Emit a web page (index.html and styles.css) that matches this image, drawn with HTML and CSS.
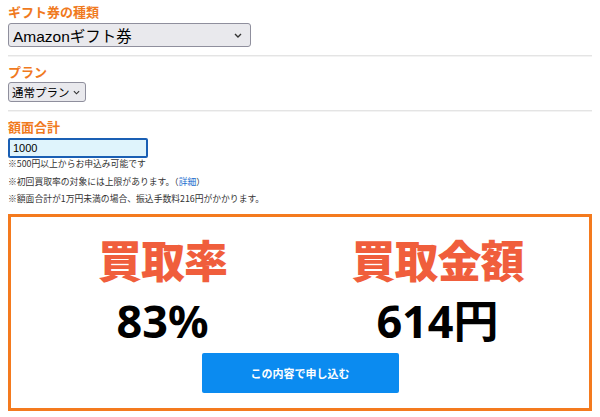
FILE: index.html
```html
<!DOCTYPE html>
<html lang="ja">
<head>
<meta charset="utf-8">
<link rel="stylesheet" href="styles.css">
</head>
<body>
<div class="page">
  <div class="field">
    <div class="label">ギフト券の種類</div>
    <div class="select select-wide"><span>Amazonギフト券</span><svg class="chev" viewBox="0 0 8 5" width="8" height="5"><path d="M1 1l3 3 3-3" fill="none" stroke="#333" stroke-width="1.4"/></svg></div>
  </div>
  <div class="sep"></div>
  <div class="field">
    <div class="label">プラン</div>
    <div class="select select-small"><span>通常プラン</span><svg class="chev" viewBox="0 0 8 5" width="7" height="5"><path d="M1 1l3 3 3-3" fill="none" stroke="#333" stroke-width="1.3"/></svg></div>
  </div>
  <div class="sep"></div>
  <div class="field">
    <div class="label">額面合計</div>
    <div class="input">1000</div>
    <div class="notes">
      <p class="note">※500円以上からお申込み可能です</p>
      <p class="note">※初回買取率の対象には上限があります。（<a class="link">詳細</a>）</p>
      <p class="note">※額面合計が1万円未満の場合、振込手数料216円がかかります。</p>
    </div>
  </div>
  <div class="result">
    <div class="cols">
      <div class="col">
        <div class="big-label">買取率</div>
        <div class="big-value">83%</div>
      </div>
      <div class="col">
        <div class="big-label">買取金額</div>
        <div class="big-value">614円</div>
      </div>
    </div>
    <div class="btn">この内容で申し込む</div>
  </div>
</div>
</body>
</html>
```
FILE: styles.css
```css
html, body {
  margin: 0;
  padding: 0;
  background: #fff;
}
body {
  font-family: "Noto Sans CJK JP", "Noto Sans", sans-serif;
  color: #222;
}
.page {
  width: 584px;
  padding: 2px 8px 0;
}
.label {
  color: #f07a1e;
  font-weight: bold;
  font-size: 13px;
  line-height: 20px;
}
.field {
  display: flex;
  flex-direction: column;
  align-items: flex-start;
}
.select {
  display: flex;
  align-items: center;
  justify-content: space-between;
  box-sizing: border-box;
  background: #e9e9ed;
  border: 1px solid #8f8f9d;
  border-radius: 3px;
  color: #000;
}
.select-wide {
  width: 243px;
  height: 24px;
  margin-top: 1px;
  padding: 0 8px 0 4px;
  font-family: "Liberation Sans", "Noto Sans CJK JP", sans-serif;
  font-size: 15.5px;
}
.select-small {
  width: 78px;
  height: 20px;
  padding: 0 5px 0 3px;
  font-size: 11.5px;
}
.sep {
  height: 1px;
  background: #e4e4e4;
  box-shadow: 0 1px 0 #f3f3f3;
  margin: 8px 0 6px;
}
.input {
  box-sizing: border-box;
  width: 140px;
  height: 20px;
  margin-top: 1px;
  border: 2px solid #1a5fb4;
  border-radius: 2px;
  background: #dff4fc;
  font-family: "Liberation Sans", sans-serif;
  font-size: 11px;
  line-height: 16px;
  padding: 0 3px;
  color: #000;
}
.notes {
  display: flex;
  flex-direction: column;
  gap: 5.5px;
}
.note {
  margin: 0;
  font-size: 8.8px;
  line-height: 12px;
  color: #333;
}
.link {
  color: #1a6fd0;
}
.result {
  margin-top: 9px;
  border: 3px solid #f47a1e;
  height: 191px;
  display: flex;
  flex-direction: column;
  align-items: center;
}
.cols {
  display: flex;
  justify-content: center;
  margin-top: 14px;
}
.col {
  width: 275px;
  display: flex;
  flex-direction: column;
  align-items: center;
}
.big-label {
  color: #f05e3c;
  font-weight: 900;
  font-size: 44px;
  line-height: 56px;
  letter-spacing: -1px;
}
.big-value {
  color: #000;
  font-family: "Noto Sans", "Noto Sans CJK JP", sans-serif;
  font-weight: bold;
  font-size: 45px;
  line-height: 58px;
  margin-top: 5px;
}
.btn {
  margin-top: 3px;
  width: 197px;
  height: 40px;
  background: #0b8bf0;
  border-radius: 2px;
  color: #fff;
  font-size: 11px;
  font-weight: bold;
  display: flex;
  align-items: center;
  justify-content: center;
}
```
